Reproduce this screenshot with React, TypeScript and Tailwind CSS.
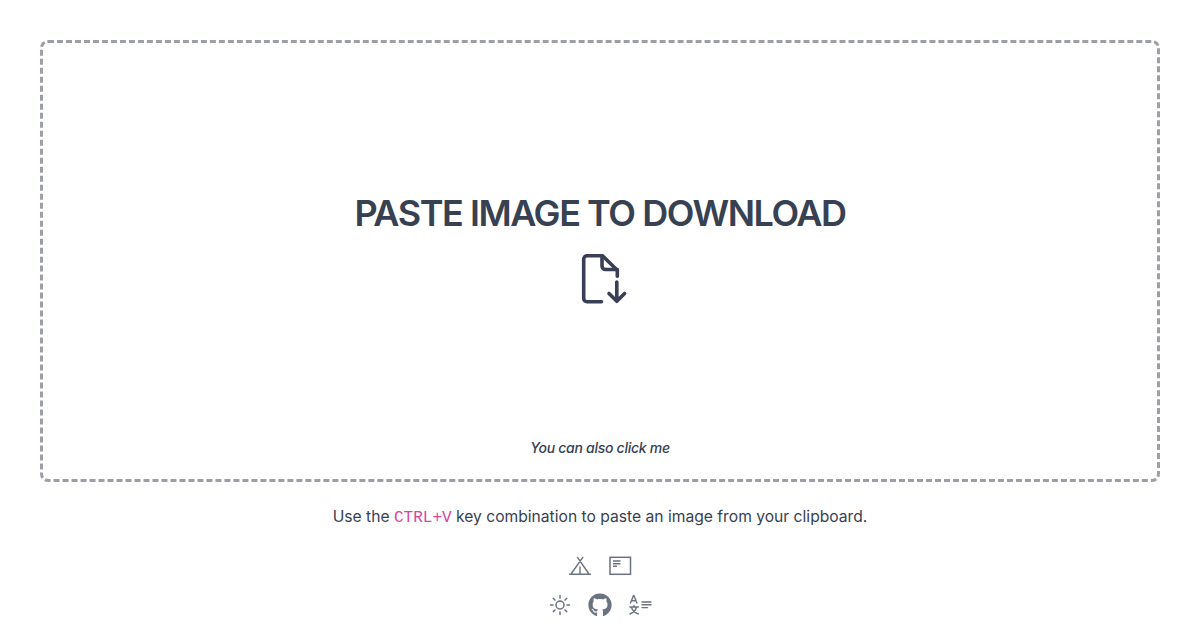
import { FaGithub } from 'react-icons/fa';

function FileDownIcon() {
  return (
    <svg width="48" height="52" viewBox="0 0 48 52" fill="none" stroke="#3a3f58" strokeWidth="3.600" strokeLinecap="round" strokeLinejoin="round">
      <path d="M21.500 49.700H7a3.300 3.300 0 0 1-3.300-3.300V7A3.300 3.300 0 0 1 7 3.700h15.500l14.800 14.500v6" />
      <path d="M22 3.700V14a3.500 3.500 0 0 0 3.500 3.500h11.800" />
      <path d="M36.800 30v19M29 41.500l7.800 7.800 7.800-7.800" />
    </svg>
  );
}

function TentIcon() {
  return (
    <svg width="24" height="24" viewBox="0 0 24 24" fill="none" stroke="#6b7280" strokeWidth="1.400" strokeLinecap="round" strokeLinejoin="round">
      <path d="M9.500 3.300l11.500 16.700M14.800 3.300L3 20M1.500 20.300h21M12 13v7" />
    </svg>
  );
}

function TerminalIcon() {
  return (
    <svg width="24" height="24" viewBox="0 0 24 24" fill="none" stroke="#6b7280" strokeWidth="1.500">
      <rect x="2" y="3.300" width="20.500" height="17" />
      <path d="M5 7h7.500M5 9.700h7.500M5 12.300h4" />
    </svg>
  );
}

function SunIcon() {
  return (
    <svg width="24" height="24" viewBox="0 0 24 24" fill="none" stroke="#6b7280" strokeWidth="1.500" strokeLinecap="round">
      <circle cx="12" cy="12" r="4" />
      <path d="M12 2.500v2.500M12 19v2.500M2.500 12H5M19 12h2.500M5.200 5.200L7 7M17 17l1.800 1.800M5.200 18.800L7 17M17 7l1.800-1.800" />
    </svg>
  );
}

function TranslateIcon() {
  return (
    <svg width="24" height="24" viewBox="0 0 24 24" fill="none" stroke="#6b7280" strokeWidth="1.400" strokeLinecap="round" strokeLinejoin="round">
      <path d="M2.500 10L5.500 2.500h.4l3 7.500M3.500 7.700h4.500" />
      <path d="M1.800 14h8.500M6 12.500V14M8.500 14c-.7 3-3 5.500-6.500 7M3.500 14.500c1 3 3.500 5.300 6.800 6.500" />
      <path d="M14 9h9M14 11.800h9M14 14.600h5.500" />
    </svg>
  );
}

export default function App() {
  return (
    <div className="min-h-screen bg-white p-10 font-['Inter',sans-serif] text-[#374151]">
      <div className="flex h-[442px] flex-col items-center rounded-lg border-[3px] border-dashed border-[#9ca0a6]">
        <div className="flex flex-1 flex-col items-center pt-[150px]">
          <h1 className="text-4xl leading-10 font-semibold tracking-[-0.04em] text-[#374151]">PASTE IMAGE TO DOWNLOAD</h1>
          <div className="mt-[19px] ml-2">
            <FileDownIcon />
          </div>
        </div>
        <p className="pb-[21px] text-sm italic font-medium tracking-[-0.02em]">You can also click me</p>
      </div>
      <p className="mt-[23px] text-center text-[15.650px] leading-6 text-[#374151]">
        Use the <code className="font-['Liberation_Mono',monospace] text-base text-[#d946a0]">CTRL+V</code> key combination to paste an image from your clipboard.
      </p>
      <div className="mt-[24px] flex justify-center gap-4">
        <TentIcon />
        <TerminalIcon />
      </div>
      <div className="mt-[15px] flex justify-center gap-4">
        <SunIcon />
        <FaGithub className="text-[#6b7280]" size={24} />
        <TranslateIcon />
      </div>
    </div>
  );
}
